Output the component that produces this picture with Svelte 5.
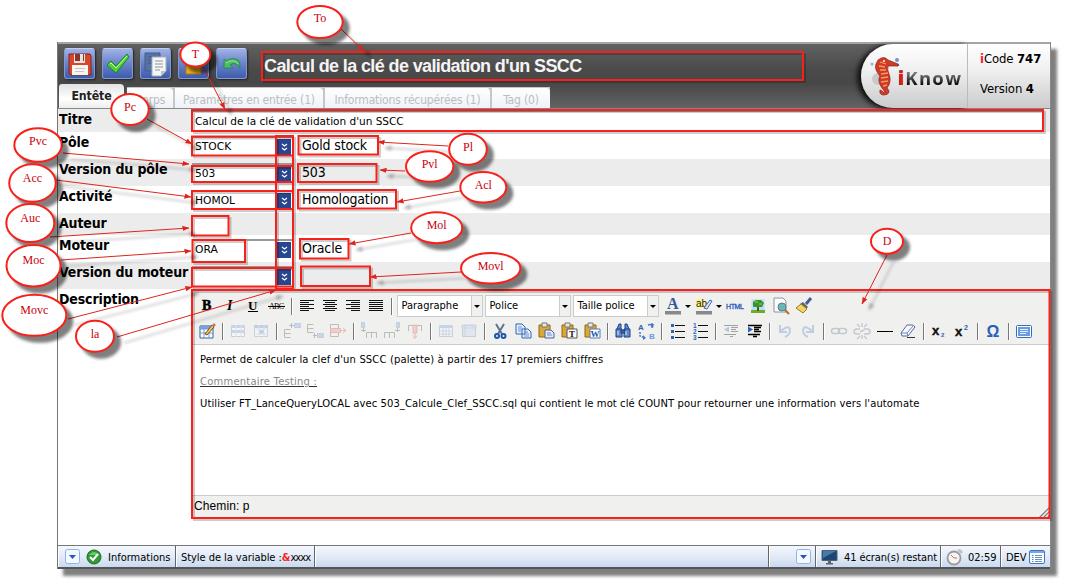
<script>
  const tools = [
    { id: 'save', svg: '<path d="M2 3h21l1 2v19H4l-2-2z" fill="#d8472c" stroke="#84241a"/><path d="M7 3h11v9H7z" fill="#e4e4e4"/><path d="M8 3h5v7H8zM16 3h1v7h-1z" fill="#8c3526"/><path d="M5 14h16v10H5z" fill="#f8f5f0"/><path d="M8 17.500h10M8 20.500h9" stroke="#c5c5c5"/>' },
    { id: 'check', svg: '<path d="M2 14l4-4 5 5L22 3l2 3-13 16z" fill="#55cf3b" stroke="#17851d"/><path d="M5 13l1-1 5 5L22 5" stroke="#c4ff9b" fill="none"/>' },
    { id: 'copy', svg: '<path d="M2 2h15v18H2z" fill="#5872a5" stroke="#415b91"/><path d="M5 6h9M5 9h9M5 12h6" stroke="#405a91"/><path d="M9 6h14v14l-5 5H9z" fill="#f3f5f7" stroke="#aab0b8"/><path d="M12 10h8M12 13h8M12 16h8M12 19h5" stroke="#8f969d"/><path d="M18 25v-5h5z" fill="#bdc1c5"/>' },
    { id: 'lock', svg: '<path d="M8 12V7q5-6 10 0v5" fill="none" stroke="#ddd" stroke-width="3"/><path d="M5 12h15v11H5z" fill="#e9ad20" stroke="#b67807"/><path d="M6 14h13" stroke="#ffdc62" stroke-width="2"/>' },
    { id: 'undo', svg: '<path d="M5 8v9h9l-3-3q6-4 10 3 1-11-9-9-3 0-4 2z" fill="#50ba69" stroke="#238f47"/><path d="M7 12q8-5 12 1" stroke="#98e4a5" fill="none"/>' }
  ];
  const tabs = [['Corps', 46], ['Paramètres en entrée (1)', 148], ['Informations récupérées (1)', 165], ['Tag (0)', 58]];
  const rows = [
    { label: 'Titre', h: 23, wide: "Calcul de la clé de validation d'un SSCC" },
    { label: 'Pôle', h: 27, value: 'STOCK', select: true, text: 'Gold stock' },
    { label: 'Version du pôle', h: 27, value: '503', select: true, text: '503' },
    { label: 'Activité', h: 27, value: 'HOMOL', select: true, text: 'Homologation' },
    { label: 'Auteur', h: 22, short: true },
    { label: 'Moteur', h: 27, value: 'ORA', select: true, text: 'Oracle' },
    { label: 'Version du moteur', h: 27, value: '', select: true, text: '' }
  ];

  const lines = (xs) => xs.map(([a, b], i) => `<path d="M${a} ${4.5 + i * 2}H${b}" stroke="#111"/>`).join('');
  const board = '<path d="M3 4h11v12H3z" fill="#d9a83a" stroke="#93690f"/><path d="M6 2h5v4H6z" fill="#e9e9e9" stroke="#777"/>';
  const chars = (t, x, y, s, f, extra = '') => `<text x="${x}" y="${y}" font-size="${s}" fill="${f}" ${extra}>${t}</text>`;
  const serif = 'font-family="Liberation Serif" font-weight="bold"';
  const sans = 'font-family="Liberation Sans" font-weight="bold"';
  const icons = {
    bold: chars('B', 5, 14, 14, '#000', serif + ' stroke="#000" stroke-width=".5"'),
    italic: chars('I', 7, 14, 14, '#000', serif + ' font-style="italic"'),
    underline: chars('U', 5, 13.5, 13, '#000', serif) + '<path d="M5 15.500h10" stroke="#000"/>',
    strike: chars('ABC', 3, 13, 8, '#000', 'font-family="Liberation Serif" textLength="15"') + '<path d="M2 10.500h17" stroke="#000"/>',
    left: lines([[3, 17], [3, 12], [3, 17], [3, 12], [3, 17], [3, 12]]),
    center: lines([[3, 17], [5, 15], [3, 17], [5, 15], [3, 17], [5, 15]]),
    right: lines([[3, 17], [8, 17], [3, 17], [8, 17], [3, 17], [8, 17]]),
    full: lines([[3, 17], [3, 17], [3, 17], [3, 17], [3, 17], [3, 17]]),
    fore: chars('A', 4, 13, 16, '#34599c', serif) + '<path d="M2 15h16v3.500H2z" fill="#888"/>',
    back: '<path d="M2 3h9v9H2z" fill="#fff38a"/>' + chars('ab', 2, 11, 10, '#222', 'font-family="Liberation Sans"') + '<path d="M10 12l6-8 2 1-5 8z" fill="#d6e6ff" stroke="#416aac"/><path d="M2 15h16v3.500H2z" fill="#888"/>',
    html: chars('HTML', 1, 13, 7, '#2558bd', 'font-family="Liberation Sans" stroke="#2558bd" stroke-width=".3" textLength="18"'),
    tree: '<path d="M3 3h14v14H3z" fill="#b8ddf6" stroke="#eee"/><path d="M3 14h14v3H3z" fill="#6aad31"/><path d="M9 10h2v5H9z" fill="#70451a"/><path d="M5 10V6l3-2h5l3 3-2 4H6z" fill="#37952b"/><path d="M7 6h3m1 2h3" stroke="#9ad84a"/>',
    preview: '<path d="M3 2h9l3 3v11H3z" fill="#fafafa" stroke="#8896a5"/><circle cx="11" cy="11" r="4" fill="#67b9b3" stroke="#637b8c"/><path d="M14 14l4 4" stroke="#b06d2e" stroke-width="2"/>',
    brush: '<path d="M17 2l-5 6" stroke="#445b9c" stroke-width="3"/><path d="M9 6l5 5-2 2-6-5z" fill="#5e6374"/><path d="M7 8l6 5-4 4-7-5z" fill="#f3d565" stroke="#9f7c24"/>',
    edit: '<path d="M3 5h13v12H3z" fill="#fff" stroke="#3260a4"/><path d="M3 5h13v3H3zM3 12h13M7 8v9M12 8v9" fill="#79a4df" stroke="#759bd0"/><path d="M8 13l7-9 2 2-7 8z" fill="#f3c45b" stroke="#755225"/><path d="M15 4l2-2 2 2-2 2" fill="#cf7770"/>',
    rowp: '<path d="M3.500 4.500h13v11h-13z" fill="#fff" stroke="#7d9bc8"/><path d="M3 4h14v3H3zM3 9h14v3H3z" fill="#86a8dd"/><path d="M8 4v12M13 4v12" stroke="#bccce5"/>',
    cellp: '<path d="M3.500 4.500h13v11h-13z" fill="#fff" stroke="#7d9bc8"/><path d="M3 4h14v3H3zM8 9h5v4H8z" fill="#6f98d8"/><path d="M3 8h14M3 13h14M8 4v12M13 4v12" stroke="#bccce5"/>',
    rbefore: '<path d="M2.500 8.500h6M2.500 8.500v8M2.500 12.500h6M2.500 16.500h6M7 4.500h5M9.500 2v5" fill="none" stroke="#666"/><path d="M12.500 2.500h6v4h-6z" fill="#8fb1e8" stroke="#7899cd"/>',
    rafter: '<path d="M2.500 3.500h6M2.500 3.500v8M2.500 7.500h6M2.500 11.500h6M8 14.500h4M9.500 12v5" fill="none" stroke="#666"/><path d="M12.500 12.500h6v4h-6z" fill="#8fb1e8" stroke="#7899cd"/>',
    rdel: '<path d="M2.500 3.500h8M2.500 3.500v12M2.500 15.500h8M10.500 3.500v4M10.500 11.500v4" fill="none" stroke="#666"/><path d="M2.500 7.500h10v4h-10z" fill="#ee9a9a" stroke="#d76565"/><path d="M13 9.500h5M15 7l3 2.500-3 2.500" stroke="#d76565" fill="none"/>',
    cbefore: '<path d="M7.500 17v-5.500h10V17M12.500 11.500V17M4.500 7v4M2 9.500h5" fill="none" stroke="#666"/><path d="M2.500 1.500h3v5h-3z" fill="#8fb1e8" stroke="#7899cd"/>',
    cafter: '<path d="M2.500 17v-5.500h10V17M7.500 11.500V17M15.500 7v4M13 9.500h5" fill="none" stroke="#666"/><path d="M14.500 1.500h3v5h-3z" fill="#8fb1e8" stroke="#7899cd"/>',
    cdel: '<path d="M3.500 10V4.500h13V10" fill="none" stroke="#666"/><path d="M8 4h4v8H8z" fill="#ee9a9a" stroke="#d76565"/><path d="M10 12v5M8 14.500l2 3 2-3" stroke="#d76565" fill="none"/>',
    split: '<path d="M3.500 4.500h13v11h-13z" fill="#fff" stroke="#7d9bc8"/><path d="M3 4h14v3H3z" fill="#86a8dd"/><path d="M3 10h14M3 13h14M7 4v12M10 7v9M13 4v12" stroke="#8daad5"/>',
    merge: '<path d="M3.500 4.500h13v11h-13z" fill="#c5d6ef" stroke="#7d9bc8"/><path d="M3 4h14v3H3zM6 4v12M14 4v3" fill="none" stroke="#8daad5"/>',
    cut: '<path d="M6 3l6 10M14 3L8 13" stroke="#5c748f" stroke-width="2"/><circle cx="7" cy="15" r="2" fill="none" stroke="#1e55ae" stroke-width="2"/><circle cx="13.500" cy="15" r="2" fill="none" stroke="#1e55ae" stroke-width="2"/>',
    copy: '<path d="M3 3h6l3 3v7H3zM9 8h6l3 3v6H9z" fill="#e3eeff" stroke="#3465b0"/><path d="M5 6h4M5 8h4M5 10h3M11 11h4M11 13h5M11 15h5" stroke="#6c91cb"/>',
    paste: board + '<path d="M9 9h6l3 3v5H9z" fill="#dfeaff" stroke="#4e678e"/><path d="M11 12h4M11 14h5" stroke="#7590b7"/>',
    pastet: board + '<path d="M8 8h10v9H8z" fill="#fff" stroke="#555"/>' + chars('T', 10, 16, 9, '#111', serif),
    pastew: board + '<path d="M8 8h10v9H8z" fill="#fff" stroke="#547bbb"/>' + chars('W', 8.500, 16, 9, '#1e58ae', serif),
    find: '<path d="M4 8l2-5h2v5M12 8V3h2l2 5M3 8h6v8H3zM11 8h6v8h-6zM8 9h4v3H8z" fill="#6689c5" stroke="#1b438a"/><path d="M5 10v4M13 10v4" stroke="#d2e4ff"/>',
    replace: chars('A', 2, 9, 8, '#375fac', sans) + chars('B', 13, 18, 8, '#7397dc', sans) + '<path d="M4 11v4l5 2M12 4l4-1v5" fill="none" stroke="#4779d2" stroke-width="1.500" stroke-dasharray="2 1"/><path d="M7 14l3 3-3 2M13 3h5l-1 4" fill="#4779d2"/>',
    bullets: '<path d="M8 4.500h10M8 10.500h10M8 16.500h10" stroke="#111"/><path d="M4 3h3v3H4zM4 9h3v3H4zM4 15h3v3H4z" fill="#3263b6"/>',
    numbers: '<path d="M8 4.500h10M8 10.500h10M8 16.500h10" stroke="#111"/>' + chars('1', 3, 7, 6.500, '#2b62bf', sans) + chars('2', 3, 13, 6.500, '#2b62bf', sans) + chars('3', 3, 19, 6.500, '#2b62bf', sans),
    outdent: '<path d="M3 4.500h14M10 6.500h7M10 8.500h5M10 10.500h7M3 13.500h12M9 15.500h3" stroke="#222"/><path d="M8 5.500v6l-5-3z" fill="#5585cf"/>',
    indent: '<path d="M4 4.500h14M10 6.500h7M10 8.500h5M10 10.500h7M4 13.500h12M9 15.500h4" stroke="#000" stroke-width="1.300"/><path d="M4 5.500v6l5-3z" fill="#2863bf"/>',
    undo: '<path d="M5 4v7h7M6 10q8-7 9-1 0 5-5 7" fill="none" stroke="#7196cf" stroke-width="2"/>',
    redo: '<path d="M15 4v7H8M14 10Q6 3 5 9q0 5 5 7" fill="none" stroke="#7196cf" stroke-width="2"/>',
    link: '<rect x="2.500" y="7.500" width="8" height="5" rx="2.500" fill="none" stroke="#7c889e" stroke-width="1.500"/><rect x="9.500" y="7.500" width="8" height="5" rx="2.500" fill="none" stroke="#7c889e" stroke-width="1.500"/>',
    unlink: '<path d="M8 8H5q-3 0-3 2.500T5 13h3M12 8h3q3 0 3 2.500T15 13h-3M10 2v4M5 3l3 3M15 3l-3 3M10 14v4M8 15l-3 3M12 15l3 3M8 11l4-2" fill="none" stroke="#7c889e" stroke-width="1.400"/>',
    hr: '<path d="M2 10.500h16" stroke="#000"/>',
    eraser: '<path d="M9 4h6l2 2-7 9H4l-1-3z" fill="#f5f8ff" stroke="#536b9a"/><path d="M3 12h6l7-8M9 12l1 3" fill="none" stroke="#7188b2"/><path d="M9 16.500h8" stroke="#333"/>',
    sub: chars('x', 3, 14, 13, '#111', sans + ' stroke="#111" stroke-width=".4"') + chars('2', 12, 16, 6, '#285dbb', sans),
    sup: chars('x', 3, 15, 13, '#111', sans + ' stroke="#111" stroke-width=".4"') + chars('2', 12, 9, 7, '#285dbb', sans),
    omega: chars('Ω', 3.500, 16, 16, '#2861bd', sans),
    screen: '<rect x="2.500" y="4.500" width="15" height="12" rx="1" fill="#fff" stroke="#346bbd"/><path d="M4 6h12v9H4z" fill="#6a9ae2"/><path d="M6 8.500h8M6 10.500h8M6 12.500h6" stroke="#e5efff"/>'
  };
  const row1a = ['bold', 'italic', 'underline', 'strike', '|', 'left', 'center', 'right', 'full', '|'];
  const row1b = ['html', 'tree', 'preview', 'brush'];
  const row2 = ['edit', '|', '-rowp', '-cellp', '|', '-rbefore', '-rafter', '-rdel', '|', '-cbefore', '-cafter', '-cdel', '|', '-split', '-merge', '|', 'cut', 'copy', 'paste', 'pastet', 'pastew', '|', 'find', 'replace', '|', 'bullets', 'numbers', '|', '-outdent', 'indent', '|', '-undo', '-redo', '|', '-link', '-unlink', 'hr', 'eraser', '|', 'sub', 'sup', '|', 'omega', '|', 'screen'];

  const boxes = [
    [262, 52, 803, 80], [192, 110, 1043, 131], [192, 136.5, 293, 155.5], [192, 166, 293, 182], [192, 191, 293, 209],
    [192, 216, 228.5, 235.5], [192.5, 240, 245, 262], [192, 268, 293, 286.5], [276, 136, 293, 289],
    [298.5, 136, 378, 154.5], [298, 164, 376.5, 182], [298, 190, 396, 208.5], [300, 239, 348.5, 258.5], [301, 266.5, 370, 286], [192, 290, 1049.5, 518]
  ];
  const notes = [
    ['To', 320, 22, 22.7, 16, 22, 341, 29, 364, 51], ['T', 195.3, 54.5, 15, 12, 58, 203, 67, 225, 109],
    ['Pc', 130, 109.5, 18.7, 15.5, 111, 147, 119, 192, 144], ['Pvc', 38, 145, 23.7, 16.8, 145, 63, 153, 189, 164],
    ['Acc', 32.5, 183, 23.3, 18.8, 182, 56, 180, 191, 197], ['Auc', 30.3, 223, 24, 19, 222, 50, 237, 189, 228],
    ['Moc', 33.5, 265.7, 27, 20.7, 264, 61, 260, 191, 251], ['Movc', 34.3, 315.3, 32, 20.5, 314, 68, 319, 192, 287],
    ['la', 95, 336.3, 19, 15.5, 338, 117, 337, 276, 290], ['Pl', 468, 149.3, 18.8, 15.5, 151, 448, 146, 378, 142],
    ['Pvl', 429.7, 166.5, 23.7, 15.3, 168, 405, 171, 380, 170], ['Acl', 483.3, 187.3, 23, 15.3, 189, 460, 191, 397, 202],
    ['Mol', 436.7, 227.7, 25.5, 15.5, 229, 411, 233, 349, 244], ['Movl', 490.7, 268.3, 29.7, 15.3, 270, 461, 272, 370, 277],
    ['D', 887, 241.3, 16, 12.5, 245, 887, 255, 862, 304]
  ];
</script>

{#snippet icon(name)}
  {#if name === '|'}
    <span class="sep"></span>
  {:else}
    <span class="cell" class:off={name[0] === '-'}>
      <svg width="20" height="20" viewBox="0 0 20 20">{@html icons[name.replace('-', '')]}</svg>
    </span>
  {/if}
{/snippet}

{#snippet drop()}
  <svg class="drop" width="15" height="15" viewBox="0 0 15 15"><rect x=".5" y=".5" width="14" height="14" rx="2" fill="#f4f9ff" stroke="#8fb4e8" /><path d="M4 6h7l-3.500 4z" fill="#2b57b5" /></svg>
{/snippet}

<div class="page">
  <main class="window">
    <header>
      <div class="left">
        <div class="bar">
          {#each tools as t (t.id)}
            <button aria-label={t.id}><svg width="26" height="26" viewBox="0 0 26 26">{@html t.svg}</svg></button>
          {/each}
          <h1>Calcul de la clé de validation d'un SSCC</h1>
        </div>
        <nav>
          <span class="tab active">Entête</span>
          <div class="others">
            {#each tabs as [name, w]}
              <span class="tab" style:width="{w}px">{name}</span>
            {/each}
          </div>
        </nav>
      </div>
      <div class="brand">
        <svg width="38" height="42" viewBox="0 0 38 42">
          <circle cx="9" cy="23" r="6" fill="#c9c9c9" /><circle cx="3" cy="8" r="1.500" fill="#9ab1cb" /><circle cx="28" cy="4" r="2" fill="#7196bd" /><circle cx="29" cy="9" r="1.200" fill="#587ca9" />
          <path d="M9 4q6-5 10 0l10 4v2l-10 0q-1 4 1 8 3 8-2 14 2 2 2 4-1 3-5 3-5 0-4-5l2 1q1 2 3 1l-3-4q-5-7-2-12-6-7-4-12z" fill="#cf3b27" stroke="#8f1e17" stroke-width=".7" />
          <path d="M11 6l6 2M10 10l6 1M11 14l6 0M12 18l7-1M12 22l7-1M12 26l7-1M14 30l4-1" stroke="#f49b62" stroke-width="1.300" /><circle cx="15" cy="5" r="1" fill="#fff" />
        </svg>
        <span class="word"><b>i</b>Know</span>
      </div>
      <div class="meta">
        <p><b class="red">i</b>Code <b>747</b></p>
        <p>Version <b>4</b></p>
      </div>
    </header>

    <section class="form">
      {#each rows as r}
        <div class="row" style:height="{r.h}px">
          <label>{r.label}</label>
          {#if r.wide}
            <div class="field wide">{r.wide}</div>
          {:else if r.short}
            <div class="field short"></div>
          {:else}
            <div class="field">{r.value}<span class="arrow"><svg width="7" height="9" viewBox="0 0 7 9"><path d="M1 1l2.500 2L6 1M1 5l2.500 2L6 5" fill="none" stroke="#fff" stroke-width="1.200" /></svg></span></div>
            <span class="text">{r.text}</span>
          {/if}
        </div>
      {/each}
      <div class="row last">
        <label>Description</label>
        <div class="editor">
          <div class="toolbar">
            <div class="line">
              {#each row1a as n}{@render icon(n)}{/each}
              {#each ['Paragraphe', 'Police', 'Taille police'] as s}
                <span class="select">{s}<i></i></span>
              {/each}
              <span class="gap"></span>
              {@render icon('fore')}<i class="tri"></i>
              {@render icon('back')}<i class="tri"></i>
              {#each row1b as n}{@render icon(n)}{/each}
            </div>
            <div class="line second">
              {#each row2 as n}{@render icon(n)}{/each}
            </div>
          </div>
          <article>
            <p class="p1">Permet de calculer la clef d'un SSCC (palette) à partir des 17 premiers chiffres</p>
            <p class="p2">Commentaire Testing :</p>
            <p class="p3">Utiliser FT_LanceQueryLOCAL avec 503_Calcule_Clef_SSCC.sql qui contient le mot clé COUNT pour retourner une information vers l'automate</p>
          </article>
          <div class="path">
            Chemin: p
            <svg width="12" height="12" viewBox="0 0 12 12"><path d="M1 12L12 1M5 12l7-7M9 12l3-3" stroke="#777" stroke-width="1.200" /></svg>
          </div>
        </div>
      </div>
    </section>

    <footer>
      <div class="s1">
        {@render drop()}
        <svg width="16" height="16" viewBox="0 0 16 16"><circle cx="8" cy="8" r="7" fill="#2e9b34" stroke="#1c6b22" /><path d="M3 6q5-6 10 0" fill="#72cc6d" /><path d="M4 8l3 3 5-6" fill="none" stroke="#fff" stroke-width="2" /></svg>
        <span>Informations</span>
      </div>
      <div class="s2">Style de la variable :<b>&amp;</b><span class="x">xxxx</span></div>
      <div class="s3"></div>
      <div class="s4">{@render drop()}</div>
      <div class="s5">
        <svg width="17" height="16" viewBox="0 0 17 16"><path d="M1 1.500h15v10H1z" fill="#1d4576" stroke="#54616e" /><path d="M2 2h13L2 9z" fill="#427dae" /><path d="M7 12h3v2h2v1.500H5V14h2z" fill="#59636e" /></svg>
        <span>41 écran(s) restant</span>
      </div>
      <div class="s6">
        <svg width="18" height="18" viewBox="0 0 18 18"><circle cx="8" cy="10" r="6.500" fill="#f5f5f5" stroke="#9b9b9b" stroke-width="1.800" /><path d="M8 10L5 7M8 10h3" stroke="#c06c6c" /><path d="M11 2l3-1 3 3-2 2z" fill="#c1c1c1" /></svg>
        <span>02:59</span>
      </div>
      <div class="s7"><span>DEV</span><svg width="16" height="14" viewBox="0 0 16 14"><rect x=".5" y=".5" width="15" height="13" rx="1.500" fill="#fff" stroke="#3c74c8" /><path d="M1 2h14" stroke="#77a5e8" stroke-width="2" /><path d="M6 5.500h7M6 7.500h7M6 9.500h7M6 11.500h7" stroke="#6f8fc0" /><path d="M3 5.500h1.500M3 7.500h1.500M3 9.500h1.500M3 11.500h1.500" stroke="#467fce" /></svg></div>
    </footer>
  </main>

  <svg class="notes" width="1066" height="582" viewBox="0 0 1066 582">
    <defs>
      <marker id="head" viewBox="0 0 8 6" refX="7.500" refY="3" markerWidth="7" markerHeight="6" markerUnits="userSpaceOnUse" orient="auto"><path d="M0 0l8 3-8 3z" fill="#e0241c" /></marker>
    </defs>
    <g class="boxes">
      {#each boxes as [x1, y1, x2, y2]}
        <rect x={x1} y={y1} width={x2 - x1} height={y2 - y1} />
      {/each}
    </g>
    <g class="arrows">
      {#each notes as n}
        <line x1={n[6]} y1={n[7]} x2={n[8]} y2={n[9]} marker-end="url(#head)" />
      {/each}
    </g>
    <g class="bubbles">
      {#each notes as n}
        <ellipse cx={n[1]} cy={n[2]} rx={n[3]} ry={n[4]} />
      {/each}
    </g>
    {#each notes as n}
      <text x={n[1]} y={n[5]}>{n[0]}</text>
    {/each}
  </svg>
</div>

<style>
  :global(body) { background: #fff; }
  * { box-sizing: border-box; }
  .page { position: relative; width: 1066px; height: 582px; padding: 42px 0 0 57px; overflow: hidden; background: #fff; font-family: "DejaVu Sans Condensed", "DejaVu Sans", sans-serif; color: #000; }
  .window { display: flex; flex-direction: column; width: 994px; height: 527px; background: #fff; border-left: 1px solid #777; border-right: 1px solid #888; box-shadow: 6px 7px 3px rgba(0, 0, 0, .5); }
  header { display: flex; height: 67px; border-top: 2px solid #a5a5a5; background: linear-gradient(#616161, #4a4a4a 40%, #474747 60%, #636363); border-bottom: 1px solid #888; }
  .left { flex: 1; display: flex; flex-direction: column; justify-content: space-between; }
  .bar { display: flex; gap: 7px; padding: 4px 0 0 6px; height: 36px; }
  button { width: 31px; height: 31px; flex: none; padding: 1px 2px; border: 1px solid #8399cf; border-top-color: #c2cef0; border-radius: 3px; background: linear-gradient(#a1b2e6, #6e88cd 45%, #3d5cae); box-shadow: 1px 1px 2px #222; }
  button svg { display: block; }
  h1 { margin: 7px 0 0 10px; font: bold 18px/22px "Liberation Sans", sans-serif; letter-spacing: -.62px; color: #f4f4f4; white-space: nowrap; }
  nav { display: flex; align-items: flex-end; gap: 3px; padding-left: 1px; }
  .others { display: flex; gap: 2px; background: #c6c6c6; padding-top: 1px; }
  .tab { height: 20px; border-radius: 0 4px 0 0; background: linear-gradient(#fff, #eef2f8); font-size: 12px; letter-spacing: -.16px; line-height: 24px; color: #bdbdbd; text-align: center; white-space: nowrap; }
  .tab.active { width: 65px; height: 24px; border-radius: 3px 4px 0 0; background: linear-gradient(#e2e2e2, #fff 60%, #eee); font-size: 12.300px; font-weight: bold; line-height: 24px; color: #222; }
  .brand { display: flex; align-items: center; width: 107px; padding-left: 8px; border-radius: 33px 0 0 33px; background: linear-gradient(#fff, #f0f0f0 40%, #cbcbcb); border-right: 1px solid #bbb; box-shadow: -4px 1px 5px #111; }
  .brand svg { flex: none; margin-top: 2px; }
  .word { margin: 3px 0 0 -9px; font: bold 18.500px "Open Sans", sans-serif; letter-spacing: 1.300px; background: linear-gradient(#777 35%, #111 75%); background-clip: text; color: transparent; }
  .word b { color: #d8211c; }
  .meta { width: 82px; padding: 7px 0 0 12px; background: linear-gradient(#fff, #f0f0f0 40%, #cbcbcb); }
  .meta p { margin: 0 0 14px; font-size: 13px; letter-spacing: -.1px; line-height: 16px; white-space: nowrap; }
  .red { color: #f22; }
  .form { flex: 1; display: flex; flex-direction: column; }
  .row { display: flex; align-items: flex-start; flex: none; }
  .row:nth-child(odd) { background: #ececec; }
  .row:nth-child(8) { background: #fff; }
  label { width: 134px; flex: none; padding-left: 1px; font-size: 14px; font-weight: bold; letter-spacing: -.14px; line-height: 21px; white-space: nowrap; }
  .field { display: flex; align-items: center; justify-content: space-between; width: 101px; height: 20px; margin-top: 4px; padding: 0 2px; border: solid #999; border-width: 2px 0 0 1px; background: #fff; font: 10.700px/18px "DejaVu Sans", sans-serif; }
  .field.wide { width: 852px; height: 21px; margin-top: 1px; font-size: 10.500px; padding-bottom: 1px; }
  .field.short { width: 37px; margin-top: 2px; }
  .arrow { display: grid; place-items: center; width: 14px; height: 16px; margin-left: auto; background: #27468f; }
  .text { margin: 3px 0 0 9px; font-size: 14px; letter-spacing: -.15px; line-height: 21px; white-space: nowrap; }
  .editor { width: 858px; height: 229px; border: 2px solid #bbb; border-width: 2px 0 0 1px; display: flex; flex-direction: column; }
  .toolbar { height: 54px; background: #f0f0ee; border-bottom: 1px solid #ccc; padding: 3px 0 0 2.500px; }
  .line { display: flex; height: 24px; align-items: center; }
  .second { margin-top: 1px; }
  .cell { width: 23px; flex: none; display: flex; justify-content: center; }
  .off { opacity: .38; }
  .sep { width: 8px; height: 17px; flex: none; background: linear-gradient(#777, #777) 3px 0 / 1px 100% no-repeat, linear-gradient(#fff, #fff) 4px 0 / 1px 100% no-repeat; }
  .select { display: flex; justify-content: space-between; width: 86px; height: 22px; margin-left: 1px; margin-right: 1px; padding-left: 4px; border: 1px solid #ccc; background: #fff; font-size: 11px; line-height: 20px; white-space: nowrap; }
  .select i { width: 11px; border-left: 1px solid #ccc; background: #f0f0ee; }
  .select i::after { content: ""; display: block; width: 0; margin: 9px 0 0 2px; border: 3px solid transparent; border-top-color: #000; border-bottom: 0; }
  .gap { width: 2px; }
  .tri { width: 6px; height: 3px; border: 3px solid transparent; border-top: 3px solid #000; border-bottom: 0; margin: 0 2px 0 0; }
  article { flex: 1; background: #fff; padding: 9px 0 0 7px; font: 10px/12px "DejaVu Sans", sans-serif; white-space: nowrap; }
  article p { margin: 0 0 10px; }
  .p1 { letter-spacing: .135px; }
  .p2 { letter-spacing: .2px; color: #888; text-decoration: underline; text-decoration-color: #333; }
  .p3 { letter-spacing: .09px; }
  .path { display: flex; justify-content: space-between; align-items: flex-end; height: 23px; padding-left: 1px; border-top: 1px solid #ccc; background: #f0f0ee; font: 12px/23px "Liberation Sans", sans-serif; letter-spacing: .1px; }
  footer { display: flex; height: 24px; border-top: 1px solid #777; border-bottom: 2px solid #555; background: linear-gradient(#f4f8fe, #e3ebf7 50%, #c9d9f0); font-size: 11px; white-space: nowrap; }
  footer > div { display: flex; align-items: center; border-right: 1px solid #666; box-shadow: inset 1px 0 #fff; }
  footer svg { flex: none; }
  footer span, .s2 { padding-top: 1px; }
  .s1 { width: 118px; padding-left: 7px; gap: 6px; }
  .s2 { width: 139px; padding-left: 5px; letter-spacing: -.05px; }
  .s2 b { color: #f22; }
  .s2 .x { padding-top: 0; letter-spacing: -.9px; }
  .s3 { flex: 1; }
  .s4 { width: 47px; padding-left: 27px; }
  .s5 { width: 125px; padding-left: 5px; gap: 6px; letter-spacing: -.1px; }
  .s6 { width: 60px; padding-left: 5px; gap: 4px; }
  .s7 { width: 49px; padding-left: 5px; gap: 2px; }
  footer > .s7 { border-right: 0; }
  .notes { position: absolute; left: 0; top: 0; pointer-events: none; }
  .boxes rect { fill: none; stroke: #f9201a; stroke-width: 2; }
  .boxes { filter: drop-shadow(2px 2px 0 rgba(0, 0, 0, .2)); }
  .arrows line { stroke: #e0241c; stroke-width: 1; }
  .arrows { filter: drop-shadow(7px 6px 1.500px rgba(0, 0, 0, .35)); }
  .bubbles { filter: drop-shadow(6px 6px 1.500px rgba(0, 0, 0, .5)); }
  .bubbles ellipse { fill: #fff; stroke: #f9201a; stroke-width: 2; }
  .notes text { font: 12px "Liberation Serif", serif; fill: #c8000b; text-anchor: middle; }
</style>
